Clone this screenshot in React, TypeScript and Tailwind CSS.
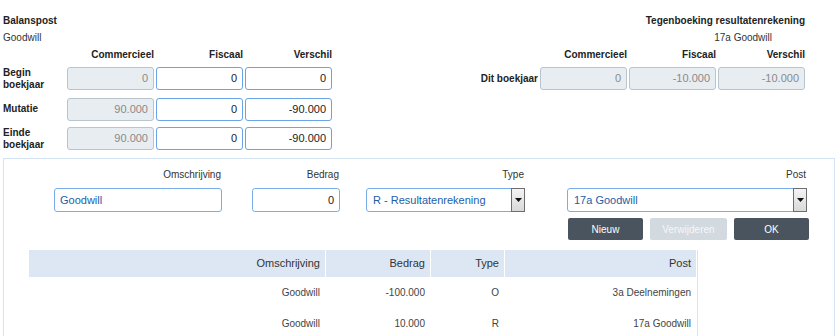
import React from 'react'

const readBox =
  'h-[23px] w-[87px] rounded-[3px] border border-[#b8c4ce] bg-[#e8edf1] pr-[5px] text-right text-[11px] leading-[21px] text-[#8a8a8a]'
const editBox =
  'h-[23px] w-[87px] rounded-[3px] border border-[#6aa3e6] bg-white pr-[5px] text-right text-[11px] leading-[21px] text-[#222]'

function Arrow() {
  return (
    <svg width="7" height="4" viewBox="0 0 7 4">
      <path d="M0 0h7L3.5 4z" fill="#111" />
    </svg>
  )
}

function SelectBox({ value, width }: { value: string; width: string }) {
  return (
    <div className={`flex h-[24px] ${width} rounded-[3px] border border-[#79ade9] bg-white`}>
      <span className="flex-1 pl-[6px] text-[11px] leading-[22px] text-[#1b5ea8]">{value}</span>
      <span className="-my-px -mr-px flex w-[14px] items-center justify-center border border-[#6e6e6e] bg-gradient-to-b from-[#f4f4f4] to-[#d9d9d9]">
        <Arrow />
      </span>
    </div>
  )
}

function Field({ label, children, className = '' }: { label: string; children: React.ReactNode; className?: string }) {
  return (
    <div className={`flex flex-col ${className}`}>
      <span className="pr-px text-right text-[10px] leading-[12px] text-[#333]">{label}</span>
      <div className="mt-[7px]">{children}</div>
    </div>
  )
}

const rows = [
  { oms: 'Goodwill', bedrag: '-100.000', type: 'O', post: '3a Deelnemingen' },
  { oms: 'Goodwill', bedrag: '10.000', type: 'R', post: '17a Goodwill' },
]

const cols = ['w-[297px]', 'w-[105px]', 'w-[74px]', 'w-[192px]']

export default function App() {
  return (
    <div className="h-[336px] w-[838px] overflow-hidden bg-white font-['Liberation_Sans',Arial,sans-serif] text-[#222]">
      {/* top: balanspost + tegenboeking */}
      <div className="flex justify-between pt-[15px]">
        <div className="pl-[3px]">
          <div className="text-[10px] font-bold leading-[12px]">Balanspost</div>
          <div className="mt-[5px] text-[10px] leading-[12px] text-[#333]">Goodwill</div>
          <div className="mt-[5px] grid grid-cols-[62px_87px_87px_87px] gap-x-[2px]">
            <span />
            <span className="text-right text-[10px] font-bold leading-[12px]">Commercieel</span>
            <span className="text-right text-[10px] font-bold leading-[12px]">Fiscaal</span>
            <span className="text-right text-[10px] font-bold leading-[12px]">Verschil</span>
          </div>
          <div className="mt-[6px] grid grid-cols-[62px_87px_87px_87px] gap-x-[2px] gap-y-[6.5px]">
            <span className="flex items-center text-[10px] font-bold leading-[12px]">
              Begin
              <br />
              boekjaar
            </span>
            <div className={readBox}>0</div>
            <div className={editBox}>0</div>
            <div className={editBox}>0</div>

            <span className="flex items-center text-[10px] font-bold leading-[12px]">Mutatie</span>
            <div className={readBox}>90.000</div>
            <div className={editBox}>0</div>
            <div className={editBox}>-90.000</div>

            <span className="flex items-center text-[10px] font-bold leading-[12px]">
              Einde
              <br />
              boekjaar
            </span>
            <div className={readBox}>90.000</div>
            <div className={editBox}>0</div>
            <div className={editBox}>-90.000</div>
          </div>
        </div>

        <div className="pr-[33px]">
          <div className="text-right text-[10px] font-bold leading-[12px]">Tegenboeking resultatenrekening</div>
          <div className="mt-[5px] pr-[33px] text-right text-[10px] leading-[12px] text-[#333]">17a Goodwill</div>
          <div className="mt-[5px] grid grid-cols-[56px_87px_87px_87px] gap-x-[2px]">
            <span />
            <span className="text-right text-[10px] font-bold leading-[12px]">Commercieel</span>
            <span className="text-right text-[10px] font-bold leading-[12px]">Fiscaal</span>
            <span className="text-right text-[10px] font-bold leading-[12px]">Verschil</span>
          </div>
          <div className="mt-[6px] grid grid-cols-[56px_87px_87px_87px] gap-x-[2px]">
            <span className="flex items-center justify-end whitespace-nowrap text-[10px] font-bold leading-[12px]">
              Dit boekjaar
            </span>
            <div className={readBox}>0</div>
            <div className={readBox}>-10.000</div>
            <div className={readBox}>-10.000</div>
          </div>
        </div>
      </div>

      {/* edit panel */}
      <div className="ml-[3px] mt-[7px] w-[832px] border border-[#d4e4f4] pt-[10px]">
        <div className="flex">
          <Field label="Omschrijving" className="ml-[50px]">
            <div className="h-[24px] w-[168px] rounded-[3px] border border-[#79ade9] bg-white pl-[5px] text-[11px] leading-[22px] text-[#1b5ea8]">
              Goodwill
            </div>
          </Field>
          <Field label="Bedrag" className="ml-[30px]">
            <div className="h-[24px] w-[88px] rounded-[3px] border border-[#79ade9] bg-white pr-[5px] text-right text-[11px] leading-[22px] text-[#222]">
              0
            </div>
          </Field>
          <Field label="Type" className="ml-[26px]">
            <SelectBox value="R - Resultatenrekening" width="w-[159px]" />
          </Field>
          <Field label="Post" className="ml-[42px]">
            <SelectBox value="17a Goodwill" width="w-[240px]" />
          </Field>
        </div>

        <div className="mt-[6px] flex gap-[7px] pl-[564px]">
          <button className="h-[22px] w-[75px] rounded-[2px] bg-[#4a545e] text-[10px] text-white">Nieuw</button>
          <button className="h-[22px] w-[77px] rounded-[2px] bg-[#d2d9df] text-[10px] text-[#f5f7f9]" disabled>
            Verwijderen
          </button>
          <button className="h-[22px] w-[75px] rounded-[2px] bg-[#4a545e] text-[10px] text-white">OK</button>
        </div>

        <div className="ml-[25px] mt-[10px] w-[669px] border-r border-[#d4e4f4]">
          <div className="flex h-[27px] bg-[#dce7f3] text-[11px] text-[#333]">
            {['Omschrijving', 'Bedrag', 'Type', 'Post'].map((h, i) => (
              <div key={h} className={`${cols[i]} flex items-center justify-end border-r border-white pr-[5px]`}>
                {h}
              </div>
            ))}
          </div>
          {rows.map((r, idx) => (
            <div key={idx} className="flex h-[31px] pb-[1px] text-[10px] text-[#444]">
              {[r.oms, r.bedrag, r.type, r.post].map((v, i) => (
                <div key={i} className={`${cols[i]} flex items-center justify-end pr-[6px]`}>
                  {v}
                </div>
              ))}
            </div>
          ))}
        </div>
      </div>
    </div>
  )
}
